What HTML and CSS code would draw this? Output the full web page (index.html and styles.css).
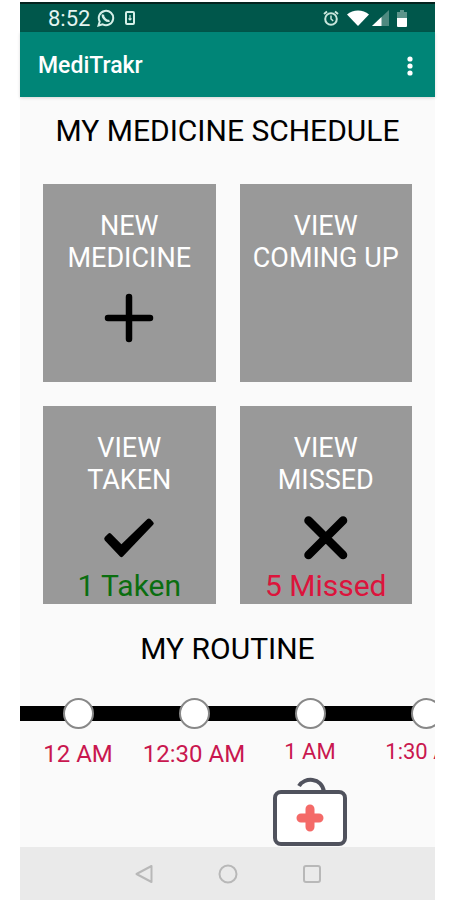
FILE: index.html
```
<!DOCTYPE html>
<html lang="en">
<head>
    <meta charset="UTF-8">
    <meta name="viewport" content="width=device-width, initial-scale=1.0">
    <title>MediTrakr</title>
    <link rel="stylesheet" href="styles.css">
</head>
<body>

    <div class="phone">
        <div class="status-bar">
            <span class="clock">8:52</span>
            <svg width="18" height="18" viewBox="0 0 18 18" fill="none" stroke="#d5f0e8" stroke-width="2">
                <path d="M1.5 16.5l1.2-4A7.2 7.2 0 1 1 5.700 15.400z"/>
                <path d="M6 5.500c-.8 3 3.500 7 6.500 6.300" stroke-width="2.400"/>
            </svg>
            <svg class="update-icon" width="10" height="14" viewBox="0 0 10 14" fill="none" stroke="#d5f0e8">
                <rect x="1" y="1" width="8" height="12" rx="1" stroke-width="2"/>
                <path d="M5 4v5M3.500 7.500L5 9l1.500-1.500" stroke-width="1.200"/>
            </svg>
            <div class="status-right">
                <svg width="16" height="16" viewBox="0 0 16 16" fill="none" stroke="#c8e6dc">
                    <circle cx="8" cy="9" r="5.800" stroke-width="2"/>
                    <path d="M8 5.500V9l2.200 1.800" stroke-width="1.500"/>
                    <path d="M1 4l3-2.500M15 4l-3-2.500" stroke-width="2"/>
                </svg>
                <svg class="wifi-icon" width="22" height="16" viewBox="0 0 22 16">
                    <path d="M0 4.500C6-1 16-1 22 4.500L11 16z" fill="#fff"/>
                </svg>
                <svg class="signal-icon" width="17" height="16" viewBox="0 0 17 16">
                    <path d="M17 0v16H0z" fill="#4f8a80"/>
                    <path d="M9.500 7v9H0z" fill="#fff"/>
                </svg>
                <svg width="10" height="17" viewBox="0 0 10 17">
                    <path d="M3 0h4v2h3v6H0V2h3z" fill="#5d958b"/>
                    <path d="M0 8h10v8a1 1 0 0 1-1 1H1a1 1 0 0 1-1-1z" fill="#fff"/>
                </svg>
            </div>
        </div>

        <header class="app-bar">
            <h1>MediTrakr</h1>
            <button class="menu-button" aria-label="More options">
                <svg width="6" height="20" viewBox="0 0 6 20" fill="#fff">
                    <circle cx="3" cy="3" r="2.600"/>
                    <circle cx="3" cy="10" r="2.600"/>
                    <circle cx="3" cy="17" r="2.600"/>
                </svg>
            </button>
        </header>

        <main>
            <h2>MY MEDICINE SCHEDULE</h2>

            <div class="cards">
                <button class="card">
                    <span class="card-title">NEW<br>MEDICINE</span>
                    <svg class="card-icon" width="56" height="56" viewBox="0 0 56 56" fill="none" stroke="#000">
                        <path d="M28 7v42M7 28h42" stroke-width="6.500" stroke-linecap="round"/>
                    </svg>
                </button>
                <button class="card">
                    <span class="card-title">VIEW<br>COMING UP</span>
                </button>
                <button class="card">
                    <span class="card-title">VIEW<br>TAKEN</span>
                    <svg class="card-icon" width="56" height="56" viewBox="0 0 56 56">
                        <path d="M2.500 26.500L6 23Q7.500 21.500 9 23L20 34L47.500 7.500Q49 6 50.500 7.500L53.500 10.500Q55 12 53.500 13.500L21.500 47Q20 48.500 18.500 47L2.500 30Q1 28.300 2.500 26.500z"/>
                    </svg>
                    <span class="count taken">1 Taken</span>
                </button>
                <button class="card">
                    <span class="card-title">VIEW<br>MISSED</span>
                    <svg class="card-icon" width="56" height="56" viewBox="0 0 56 56" fill="none" stroke="#000">
                        <path d="M9.500 9l36.500 36.500M46 9L9.500 45.500" stroke-width="9" stroke-linecap="round"/>
                    </svg>
                    <span class="count missed">5 Missed</span>
                </button>
            </div>

            <h2 class="routine-title">MY ROUTINE</h2>

            <ul class="timeline">
                <li>
                    <div class="track"><button class="stop" aria-label="12 AM"></button></div>
                    <span class="time">12 AM</span>
                </li>
                <li>
                    <div class="track"><button class="stop" aria-label="12:30 AM"></button></div>
                    <span class="time">12:30 AM</span>
                </li>
                <li>
                    <div class="track"><button class="stop" aria-label="1 AM"></button></div>
                    <span class="time small">1 AM</span>
                    <svg class="kit" width="74" height="70" viewBox="0 0 74 70" fill="none">
                        <path d="M26 9C31 0 49 0 51 15" stroke="#50525d" stroke-width="4"/>
                        <rect x="2" y="15" width="70" height="52" rx="6" fill="#fff" stroke="#50525d" stroke-width="4"/>
                        <path d="M37 32v18M28 41h18" stroke="#f46a68" stroke-width="9" stroke-linecap="round"/>
                    </svg>
                </li>
                <li>
                    <div class="track"><button class="stop" aria-label="1:30 AM"></button></div>
                    <span class="time small">1:30 AM</span>
                </li>
            </ul>
        </main>

        <nav class="nav-bar">
            <button aria-label="Back">
                <svg width="20" height="20" viewBox="0 0 20 20">
                    <path d="M17.500 2v16L2.500 10z"/>
                </svg>
            </button>
            <button aria-label="Home">
                <svg width="20" height="20" viewBox="0 0 20 20">
                    <circle cx="10" cy="10" r="8.500"/>
                </svg>
            </button>
            <button aria-label="Recent apps">
                <svg width="20" height="20" viewBox="0 0 20 20">
                    <rect x="2" y="2" width="16" height="16" rx="2"/>
                </svg>
            </button>
        </nav>
    </div>

</body>
</html>
```
FILE: styles.css
```
* {
    margin: 0;
    padding: 0;
    box-sizing: border-box;
}
body {
    font-family: Roboto, "Liberation Sans", sans-serif;
    background-color: #fff;
    color: #000;
    padding: 2px 22px 0 20px;
}
button {
    font-family: inherit;
    background: none;
    border: none;
    cursor: pointer;
}
svg {
    display: block;
}
.phone {
    display: flex;
    flex-direction: column;
    min-height: calc(100vh - 2px);
    background-color: #fafafa;
}
.status-bar {
    display: flex;
    align-items: center;
    height: 30px;
    padding: 0 28px;
    background-color: #00574b;
    border-top: 2px solid #04231f;
    color: #e4f5f0;
}
.clock {
    font-size: 22px;
    margin-right: 7px;
}
.update-icon {
    margin-left: 10px;
}
.status-right {
    display: flex;
    align-items: center;
    margin-left: auto;
}
.wifi-icon {
    margin-left: 8px;
}
.signal-icon {
    margin: 0 8px 0 3px;
}
.app-bar {
    display: flex;
    align-items: center;
    justify-content: space-between;
    height: 65px;
    padding: 2px 16px 0 18px;
    background-color: #008577;
    color: #fff;
    box-shadow: 0 1px 3px rgba(0, 0, 0, 0.15);
}
h1 {
    font-size: 23px;
    font-weight: 500;
}
.menu-button {
    padding: 6px;
}
main {
    flex: 1;
}
h2 {
    padding: 16px 0;
    font-size: 30px;
    font-weight: 400;
    line-height: 36px;
    text-align: center;
}
.cards {
    display: grid;
    grid-template-columns: 1fr 1fr;
    gap: 24px;
    padding: 19px 23px 0;
}
.card {
    display: flex;
    flex-direction: column;
    align-items: center;
    height: 198px;
    padding-top: 26px;
    background-color: #999;
}
.card-title {
    font-size: 27px;
    line-height: 32px;
    color: #fff;
}
.card-icon {
    margin-top: 16px;
}
.count {
    margin-top: 3px;
    font-size: 30px;
    line-height: 36px;
}
.taken {
    color: #0a6e0f;
}
.missed {
    color: #dc143c;
}
.routine-title {
    padding: 27px 0 31px;
}
.timeline {
    display: flex;
    list-style: none;
    overflow-x: auto;
    scrollbar-width: none;
}
.timeline li {
    display: flex;
    flex: none;
    flex-direction: column;
    align-items: center;
    width: 116px;
}
.track {
    display: flex;
    justify-content: center;
    width: 100%;
    background: linear-gradient(#000, #000) center / 100% 15px no-repeat;
}
.stop {
    width: 31px;
    height: 31px;
    border: 2px solid #888;
    border-radius: 50%;
    background-color: #fff;
}
.time {
    margin-top: 10px;
    font-size: 24px;
    line-height: 30px;
    color: #c9174f;
    white-space: nowrap;
}
.small {
    font-size: 22px;
    line-height: 26px;
}
.kit {
    margin-top: 12px;
}
.nav-bar {
    display: flex;
    align-items: center;
    justify-content: center;
    gap: 48px;
    height: 53px;
    background-color: #eaeaea;
}
.nav-bar button {
    padding: 8px;
}
.nav-bar svg {
    fill: none;
    stroke: #b8b8b8;
    stroke-width: 2;
    stroke-linejoin: round;
}
```
